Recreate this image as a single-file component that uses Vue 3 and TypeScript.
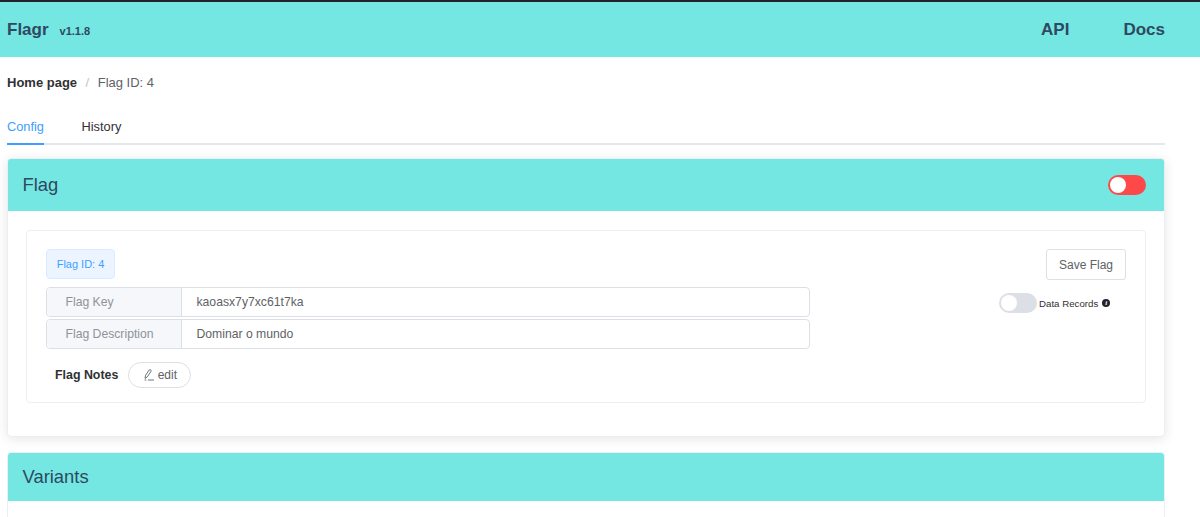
<script setup lang="ts">
import { ref } from 'vue'

const flagId = ref(4)
const flagKey = ref('kaoasx7y7xc61t7ka')
const flagDescription = ref('Dominar o mundo')
const tabs = ['Config', 'History']
const activeTab = ref('Config')
</script>

<template>
  <div class="page">
    <header class="navbar">
      <div class="brand">
        <span class="logo">Flagr</span>
        <span class="version">v1.1.8</span>
      </div>
      <nav class="links">
        <a class="api">API</a>
        <a>Docs</a>
      </nav>
    </header>

    <main class="content">
      <div class="breadcrumb">
        <strong>Home page</strong>
        <span class="sep">/</span>
        <span class="current">Flag ID: {{ flagId }}</span>
      </div>

      <div class="tabs">
        <div
          v-for="tab in tabs"
          :key="tab"
          class="tab"
          :class="{ active: tab === activeTab }"
          @click="activeTab = tab"
        >
          {{ tab }}
        </div>
      </div>

      <section class="card flag-card">
        <div class="card-header">
          <h2>Flag</h2>
          <span class="switch on"><i></i></span>
        </div>
        <div class="card-body">
          <div class="inner-card">
            <div class="form-side">
              <span class="tag">Flag ID: {{ flagId }}</span>
              <div class="input-group first">
                <div class="prepend">Flag Key</div>
                <div class="value">{{ flagKey }}</div>
              </div>
              <div class="input-group">
                <div class="prepend">Flag Description</div>
                <div class="value">{{ flagDescription }}</div>
              </div>
              <div class="notes">
                <strong>Flag Notes</strong>
                <button class="edit-btn">
                  <svg width="12" height="12" viewBox="0 0 12 12" fill="none" stroke="#606266" stroke-width="0.9">
                    <path d="M2 9.4 L2.6 6.2 L6.2 1 Q7 0.3 7.8 0.9 Q8.4 1.6 7.9 2.5 L4.3 7.9 Z" />
                    <path d="M5 11 H11" />
                    <path d="M1.6 11 H3.4" />
                  </svg>
                  edit
                </button>
              </div>
            </div>
            <div class="action-side">
              <button class="save-btn">Save Flag</button>
              <div class="records">
                <span class="switch off"><i></i></span>
                <span class="records-label">Data Records</span>
                <span class="info">i</span>
              </div>
            </div>
          </div>
        </div>
      </section>

      <section class="card">
        <div class="card-header variants">
          <h2>Variants</h2>
        </div>
        <div class="card-body"></div>
      </section>
    </main>
  </div>
</template>

<style>
html,
body {
  margin: 0;
  overflow: hidden;
  background: #fff;
}
</style>

<style scoped>
.page {
  height: 517px;
  overflow: hidden;
  font-family: "Liberation Sans", Arial, sans-serif;
  color: #606266;
  font-size: 12px;
}

.navbar {
  height: 55px;
  border-top: 2px solid #20242a;
  background: #74e7e2;
  color: #2e4960;
  display: flex;
  align-items: center;
  justify-content: space-between;
  padding: 0 35px 0 7px;
}

.brand {
  display: flex;
  align-items: baseline;
  gap: 11px;
}

.logo {
  font-size: 17px;
  font-weight: 700;
}

.version {
  font-size: 11px;
  font-weight: 700;
}

.links {
  display: flex;
  font-size: 17px;
  font-weight: 700;
}

.api {
  margin-right: 54px;
}

.content {
  width: 1158px;
  margin-left: 7px;
}

.breadcrumb {
  height: 14px;
  margin-top: 19px;
  font-size: 13px;
  line-height: 14px;
  display: flex;
  color: #606266;
}

.breadcrumb strong {
  color: #303133;
}

.sep {
  margin: 0 8.5px;
  color: #c0c4cc;
}

.tabs {
  display: flex;
  margin-top: 16px;
  height: 37px;
  border-bottom: 2px solid #e4e7ed;
  margin-bottom: 13px;
}

.tab {
  height: 37px;
  line-height: 42px;
  margin-right: 37.5px;
  color: #303133;
  font-size: 12.8px;
}

.tab.active {
  color: #409eff;
  border-bottom: 2px solid #409eff;
}

.card {
  border: 1px solid #ebeef5;
  border-radius: 4px;
  background: #fff;
  box-sizing: border-box;
}

.flag-card {
  box-shadow: 0 2px 12px 0 rgba(0, 0, 0, 0.1);
  height: 279px;
  margin-bottom: 15px;
}

.card-header {
  height: 52px;
  padding: 0 18px 0 14.5px;
  border-radius: 3px 3px 0 0;
  background: #74e7e2;
  color: #2e4960;
  display: flex;
  align-items: center;
  justify-content: space-between;
}

.card-header.variants {
  height: 48px;
}

.card-header h2 {
  margin: 0;
  font-size: 18.4px;
  font-weight: 400;
}

.card-body {
  padding: 19px 18px 20px 18px;
}

.inner-card {
  height: 173px;
  box-sizing: border-box;
  border: 1px solid #ebeef5;
  border-radius: 4px;
  padding: 18px 19px;
  display: flex;
  justify-content: space-between;
}

.form-side {
  width: 764px;
}

.tag {
  display: inline-block;
  height: 30px;
  line-height: 28px;
  box-sizing: border-box;
  width: 69px;
  text-align: center;
  border: 1px solid #d9ecff;
  border-radius: 4px;
  background: #ecf5ff;
  color: #409eff;
  font-size: 11px;
  vertical-align: top;
}

.input-group {
  display: flex;
  height: 30px;
  margin-top: 2px;
  box-sizing: border-box;
  border: 1px solid #dcdfe6;
  border-radius: 4px;
  font-size: 12.2px;
  line-height: 28px;
}

.input-group.first {
  margin-top: 8px;
}

.prepend {
  width: 135px;
  box-sizing: border-box;
  padding-left: 18.5px;
  border-right: 1px solid #dcdfe6;
  border-radius: 4px 0 0 4px;
  background: #f5f7fa;
  color: #909399;
}

.value {
  padding-left: 14.5px;
  color: #606266;
}

.notes {
  display: flex;
  align-items: center;
  margin-top: 13px;
  padding-left: 9px;
}

.notes strong {
  color: #303133;
  font-size: 12.4px;
  margin-right: 10px;
}

.edit-btn {
  width: 63px;
  height: 26px;
  padding: 0;
  box-sizing: border-box;
  border: 1px solid #dcdfe6;
  border-radius: 13px;
  background: #fff;
  color: #606266;
  font: inherit;
  display: flex;
  align-items: center;
  justify-content: center;
  gap: 3px;
}

.action-side {
  width: 127px;
  display: flex;
  flex-direction: column;
  align-items: flex-end;
}

.save-btn {
  width: 80px;
  height: 31px;
  box-sizing: border-box;
  padding: 0;
  border: 1px solid #dcdfe6;
  border-radius: 3px;
  background: #fff;
  color: #606266;
  font: inherit;
}

.records {
  display: flex;
  align-items: center;
  align-self: flex-start;
  margin-top: 13px;
}

.records-label {
  margin: 0 4px 0 2px;
  font-size: 9.7px;
  color: #303133;
}

.info {
  width: 8px;
  height: 8px;
  border-radius: 50%;
  background: #20242a;
  color: #fff;
  font-size: 7px;
  font-weight: 700;
  line-height: 8px;
  text-align: center;
  font-family: "Liberation Serif", serif;
  font-style: italic;
}

.switch {
  position: relative;
  display: inline-block;
  width: 38px;
  height: 20px;
  border-radius: 10px;
}

.switch i {
  position: absolute;
  top: 2px;
  left: 2px;
  width: 16px;
  height: 16px;
  border-radius: 50%;
  background: #fff;
}

.switch.on {
  background: #ff4949;
}

.switch.off {
  background: #dcdfe6;
}
</style>
